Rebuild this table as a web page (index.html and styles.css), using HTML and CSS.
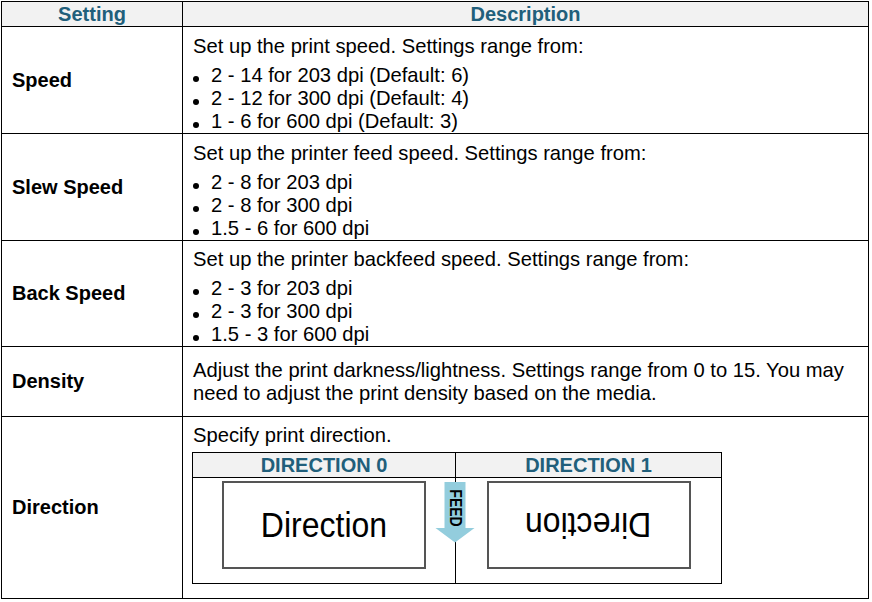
FILE: index.html
```html
<!DOCTYPE html>
<html lang="en">
<head>
<meta charset="utf-8">
<title>Settings</title>
<link rel="stylesheet" href="styles.css">
</head>
<body>
<table class="spec">
  <colgroup><col class="c1"><col class="c2"></colgroup>
  <thead>
    <tr class="hdr"><th>Setting</th><th>Description</th></tr>
  </thead>
  <tbody>
    <tr class="r-speed">
      <td class="label">Speed</td>
      <td class="desc">
        <p>Set up the print speed. Settings range from:</p>
        <ul>
          <li>2 - 14 for 203 dpi (Default: 6)</li>
          <li>2 - 12 for 300 dpi (Default: 4)</li>
          <li>1 - 6 for 600 dpi (Default: 3)</li>
        </ul>
      </td>
    </tr>
    <tr class="r-slew">
      <td class="label">Slew Speed</td>
      <td class="desc">
        <p>Set up the printer feed speed. Settings range from:</p>
        <ul>
          <li>2 - 8 for 203 dpi</li>
          <li>2 - 8 for 300 dpi</li>
          <li>1.5 - 6 for 600 dpi</li>
        </ul>
      </td>
    </tr>
    <tr class="r-back">
      <td class="label">Back Speed</td>
      <td class="desc desc-back">
        <p>Set up the printer backfeed speed. Settings range from:</p>
        <ul>
          <li>2 - 3 for 203 dpi</li>
          <li>2 - 3 for 300 dpi</li>
          <li>1.5 - 3 for 600 dpi</li>
        </ul>
      </td>
    </tr>
    <tr class="r-density">
      <td class="label">Density</td>
      <td class="desc desc-density">
        <p class="last">Adjust the print darkness/lightness. Settings range from 0 to 15. You may need to adjust the print density based on the media.</p>
      </td>
    </tr>
    <tr class="r-direction">
      <td class="label">Direction</td>
      <td class="desc">
        <p class="intro">Specify print direction.</p>
        <div class="dir-wrap">
          <table class="dir">
            <thead>
              <tr><th>DIRECTION 0</th><th>DIRECTION 1</th></tr>
            </thead>
            <tbody>
              <tr>
                <td><div class="box"><span>Direction</span></div></td>
                <td><div class="box flip"><span>Direction</span></div></td>
              </tr>
            </tbody>
          </table>
          <svg class="feed" width="40" height="62" viewBox="0 0 40 62" aria-label="FEED">
            <polygon points="9.5,0 30.5,0 30.5,46 39.5,46 20,60.5 0.5,46 9.5,46" fill="#93cddd"/>
            <text transform="translate(20.5,26) rotate(90) scale(1,1.15)" text-anchor="middle" dominant-baseline="central" font-family="Liberation Sans, Arial, sans-serif" font-weight="bold" font-size="14" fill="#000">FEED</text>
          </svg>
        </div>
      </td>
    </tr>
  </tbody>
</table>
</body>
</html>
```

FILE: styles.css
```css
html, body {
  margin: 0;
  padding: 0;
  background: #fff;
}

body {
  font-family: "Liberation Sans", Arial, sans-serif;
  color: #000;
}

.spec {
  border-collapse: collapse;
  table-layout: fixed;
  width: 868px;
  margin: 1px 0 0 1px;
}

.spec .c1 { width: 181px; }

.spec > thead > tr > th,
.spec > tbody > tr > td {
  border: 1px solid #000;
  padding: 0;
}

.hdr { height: 25px; }

.hdr th {
  background: #f2f2f2;
  color: #215f7b;
  font-size: 20px;
  font-weight: bold;
  line-height: 23px;
  text-align: center;
  vertical-align: middle;
}

.r-speed { height: 107px; }
.r-slew { height: 107px; }
.r-back { height: 106px; }
.r-density { height: 70px; }
.r-direction { height: 182px; }

.spec > tbody > tr > td.label {
  font-size: 20px;
  font-weight: bold;
  padding-left: 10px;
  vertical-align: middle;
}

.spec > tbody > tr > td.desc {
  vertical-align: top;
  padding: 8px 8px 0 10px;
  font-size: 20.2px;
  line-height: 23px;
}

.spec > tbody > tr > td.desc-back {
  padding-top: 7px;
}

.spec > tbody > tr > td.desc-density {
  padding-top: 12px;
  line-height: 23.3px;
}

.desc p {
  margin: 0 0 6px 0;
}

.desc p.last { margin: 0; }
.desc p.intro { margin: 0 0 6px 0; line-height: 21px; }

.desc ul {
  list-style: none;
  margin: 0;
  padding: 0;
}

.desc li {
  line-height: 23px;
}

.desc li::before {
  content: "";
  display: inline-block;
  width: 6px;
  height: 6px;
  border-radius: 50%;
  background: #000;
  margin-right: 12px;
  vertical-align: baseline;
}

.dir-wrap {
  position: relative;
  width: 530px;
  margin-left: -1px;
}

.dir {
  border-collapse: collapse;
  table-layout: fixed;
  width: 530px;
}

.dir th,
.dir td {
  border: 1px solid #000;
  padding: 0;
}

.dir th {
  height: 24px;
  background: #f2f2f2;
  color: #215f7b;
  font-size: 20px;
  font-weight: bold;
  line-height: 23px;
  text-align: center;
}

.dir th:first-child { width: 262px; }

.dir td {
  height: 102px;
  vertical-align: top;
  padding-top: 3px;
}

.box {
  box-sizing: border-box;
  width: 204px;
  height: 88px;
  border: 2px solid #555;
  margin: 0 auto;
  display: flex;
  align-items: center;
  justify-content: center;
  font-size: 32px;
  line-height: 1;
}

.box span {
  display: inline-block;
  transform: scaleY(1.1);
}

.box.flip span {
  transform: rotate(180deg) scaleY(1.1);
}

.feed {
  position: absolute;
  left: 243px;
  top: 30px;
  display: block;
}
```
